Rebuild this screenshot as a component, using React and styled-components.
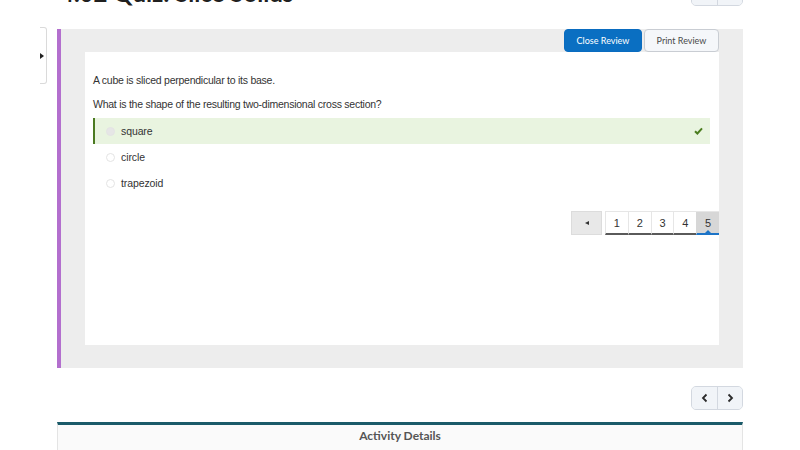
import styled, { createGlobalStyle } from "styled-components";

const GlobalStyle = createGlobalStyle`
  body {
    margin: 0;
    background: #ffffff;
    font-family: "Liberation Sans", Arial, sans-serif;
    overflow: hidden;
  }
`;

const Page = styled.div`
  width: 800px;
  height: 450px;
  overflow: hidden;
`;

const Header = styled.div`
  margin-left: 57px;
  width: 686px;
  height: 29px;
  display: flex;
  justify-content: space-between;
  align-items: flex-start;
`;

const Title = styled.h1`
  margin: -19px 0 0 3px;
  font-family: Lato, sans-serif;
  font-weight: 700;
  font-size: 24px;
  line-height: 24px;
  color: #202020;
  white-space: nowrap;
`;

const IconGroup = styled.div`
  display: flex;
  margin-top: ${(p) => p.$top || 0}px;
  border: 1px solid #d3d8e0;
  border-radius: 5px;
  overflow: hidden;
  background: #f1f4f8;
`;

const IconButton = styled.button`
  width: 25px;
  height: ${(p) => p.$h || 22}px;
  padding: 0;
  border: none;
  background: #f1f4f8;
  display: flex;
  align-items: center;
  justify-content: center;
  & + & {
    border-left: 1px solid #d3d8e0;
  }
`;

const Body = styled.div`
  margin-left: 40px;
  display: flex;
  gap: 10px;
  align-items: flex-start;
`;

const SideTab = styled.div`
  width: 6px;
  height: 55px;
  margin-top: -2px;
  border: 1px solid #dadada;
  border-left: none;
  border-radius: 0 3px 3px 0;
  background: #fff;
  display: flex;
  align-items: center;
  &::before {
    content: "";
    border-left: 4px solid #222;
    border-top: 3px solid transparent;
    border-bottom: 3px solid transparent;
  }
`;

const Panel = styled.div`
  width: 686px;
  height: 339px;
  box-sizing: border-box;
  background: #ededed;
  border-left: 4px solid #b36fce;
  padding: 0 24px 23px 24px;
  display: flex;
  flex-direction: column;
`;

const ReviewBar = styled.div`
  display: flex;
  justify-content: flex-end;
  gap: 2px;
  height: 23px;
`;

const ReviewButton = styled.button`
  height: 23px;
  width: ${(p) => p.$w}px;
  padding: 0;
  box-sizing: border-box;
  white-space: nowrap;
  border-radius: 4px;
  border: 1px solid ${(p) => (p.$primary ? "#0a6cc0" : "#c9cdd3")};
  background: ${(p) => (p.$primary ? "#0a6fc2" : "#f5f7fa")};
  color: ${(p) => (p.$primary ? "#fff" : "#4a4a4a")};
  font-family: Lato, sans-serif;
  font-size: 9px;
`;

const Card = styled.div`
  flex: 1;
  background: #fff;
  padding: 21px 9px 0 8px;
  display: flex;
  flex-direction: column;
`;

const Question = styled.p`
  margin: 0 0 10px;
  font-size: 10.5px;
  line-height: 14px;
  letter-spacing: -0.25px;
  color: #333;
  white-space: nowrap;
`;

const Options = styled.div`
  margin-top: -3px;
  display: flex;
  flex-direction: column;
`;

const Option = styled.div`
  height: 26px;
  display: flex;
  align-items: center;
  box-sizing: border-box;
  padding-left: ${(p) => (p.$correct ? 11 : 13)}px;
  padding-right: 7px;
  background: ${(p) => (p.$correct ? "#e9f4e0" : "transparent")};
  border-left: ${(p) => (p.$correct ? "2px solid #4b7a21" : "none")};
  font-size: 10.5px;
  letter-spacing: -0.1px;
  color: #333;
`;

const Radio = styled.span`
  width: 7px;
  height: 7px;
  border-radius: 50%;
  border: 1px solid #e4e4e4;
  background: ${(p) => (p.$checked ? "#e6e6e6" : "#fff")};
  margin-right: 6px;
  flex: none;
`;

const OptionText = styled.span`
  flex: 1;
`;

const Pager = styled.div`
  margin: 15px -9px 0 0;
  display: flex;
  justify-content: flex-end;
  gap: 3px;
`;

const PrevButton = styled.button`
  width: 31px;
  height: 24px;
  padding: 0;
  border: 1px solid #dcdcdc;
  background: #e8e8e8;
  display: flex;
  align-items: center;
  justify-content: center;
  &::before {
    content: "";
    border-right: 4px solid #333;
    border-top: 2.5px solid transparent;
    border-bottom: 2.5px solid transparent;
  }
`;

const Pages = styled.div`
  display: flex;
  border-top: 1px solid #e6e6e6;
`;

const PageCell = styled.div`
  position: relative;
  width: 21.8px;
  height: 21px;
  display: flex;
  align-items: center;
  justify-content: center;
  font-size: 11px;
  color: #333;
  background: ${(p) => (p.$active ? "#d7d7d7" : "#fff")};
  border-left: 1px solid ${(p) => (p.$active ? "#d7d7d7" : "#e6e6e6")};
  border-bottom: 2px solid ${(p) => (p.$active ? "#1c74c7" : "#5a5a5a")};
  &::after {
    content: "";
    display: ${(p) => (p.$active ? "block" : "none")};
    position: absolute;
    bottom: 0;
    left: 50%;
    margin-left: -3px;
    border-bottom: 3px solid #1c74c7;
    border-left: 3px solid transparent;
    border-right: 3px solid transparent;
  }
`;

const NavRow = styled.div`
  margin: 18px 0 0 57px;
  width: 686px;
  display: flex;
  justify-content: flex-end;
`;

const Details = styled.div`
  margin: 12px 0 0 57px;
  width: 686px;
  box-sizing: border-box;
  border-top: 3px solid #1a5a69;
  border-left: 1px solid #e4e4e4;
  border-right: 1px solid #e4e4e4;
  background: #fafafa;
  height: 40px;
  padding-top: 3px;
  text-align: center;
  font-family: Lato, sans-serif;
  font-weight: 700;
  font-size: 12px;
  color: #555;
`;

const Chevron = ({ dir }) => (
  <svg width="10" height="10" viewBox="0 0 10 10">
    <path
      d={dir === "left" ? "M6.5 1.5 L3 5 L6.5 8.5" : "M3.5 1.5 L7 5 L3.5 8.5"}
      fill="none"
      stroke="#2b2b2b"
      strokeWidth="1.8"
    />
  </svg>
);

const Check = () => (
  <svg width="9" height="8" viewBox="0 0 9 8">
    <path d="M1 4.2 L3.4 6.5 L8 1.3" fill="none" stroke="#4b7d1f" strokeWidth="2" />
  </svg>
);

const options = [
  { text: "square", correct: true },
  { text: "circle" },
  { text: "trapezoid" },
];

export default function App() {
  return (
    <Page>
      <GlobalStyle />
      <Header>
        <Title>4.02 Quiz: Slice Solids</Title>
        <IconGroup $top={-20}>
          <IconButton $h={24} />
          <IconButton $h={24} />
        </IconGroup>
      </Header>
      <Body>
        <SideTab />
        <Panel>
          <ReviewBar>
            <ReviewButton $primary $w={78}>Close Review</ReviewButton>
            <ReviewButton $w={75}>Print Review</ReviewButton>
          </ReviewBar>
          <Card>
            <Question>A cube is sliced perpendicular to its base.</Question>
            <Question>What is the shape of the resulting two-dimensional cross section?</Question>
            <Options>
              {options.map((o) => (
                <Option key={o.text} $correct={o.correct}>
                  <Radio $checked={o.correct} />
                  <OptionText>{o.text}</OptionText>
                  {o.correct && <Check />}
                </Option>
              ))}
            </Options>
            <Pager>
              <PrevButton />
              <Pages>
                {[1, 2, 3, 4, 5].map((n) => (
                  <PageCell key={n} $active={n === 5}>{n}</PageCell>
                ))}
              </Pages>
            </Pager>
          </Card>
        </Panel>
      </Body>
      <NavRow>
        <IconGroup>
          <IconButton>
            <Chevron dir="left" />
          </IconButton>
          <IconButton>
            <Chevron dir="right" />
          </IconButton>
        </IconGroup>
      </NavRow>
      <Details>Activity Details</Details>
    </Page>
  );
}
